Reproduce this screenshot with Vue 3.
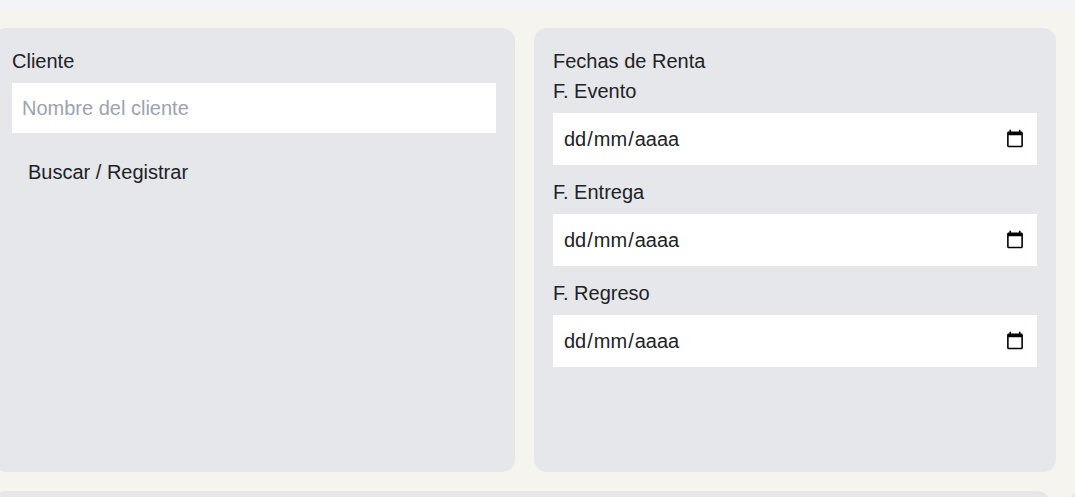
<script setup>
import { ref, reactive } from "vue";

const cliente = ref("");
const fechas = reactive([
  { id: "evento", label: "F. Evento", value: "" },
  { id: "entrega", label: "F. Entrega", value: "" },
  { id: "regreso", label: "F. Regreso", value: "" }
]);

function buscarCliente() {
  cliente.value = cliente.value.trim();
}
</script>

<template>
  <div class="page">
    <header class="topbar"></header>

    <main class="content">
      <div class="row">
        <form class="card" @submit.prevent="buscarCliente">
          <label class="text" for="cliente">Cliente</label>
          <input id="cliente" v-model="cliente" class="field" type="text" placeholder="Nombre del cliente" />
          <button class="btn" type="submit">Buscar / Registrar</button>
        </form>

        <section class="card">
          <div class="text">Fechas de Renta</div>
          <div v-for="f in fechas" :key="f.id" class="group">
            <label class="text" :for="f.id">{{ f.label }}</label>
            <div class="date">
              <input :id="f.id" v-model="f.value" class="field date-field" :class="{ empty: !f.value }" type="date" />
              <!-- date hint, shown until a day is picked -->
              <div v-if="!f.value" class="hint" aria-hidden="true">
                <span class="part">dd</span><span class="slash">/</span><span class="part">mm</span><span class="slash">/</span><span class="part">aaaa</span>
              </div>
            </div>
          </div>
        </section>
      </div>

      <div class="row bottom">
        <section class="card"></section>
        <section class="card"></section>
      </div>
    </main>
  </div>
</template>

<style>
body { margin: 0; }
</style>

<style scoped>
* { box-sizing: border-box; }
.page {
  height: 100vh;
  overflow: hidden;
  display: flex;
  flex-direction: column;
  background: #f5f4ee;
  color: #212225;
  font-family: "Liberation Sans", Arial, sans-serif;
  font-size: 20px;
  line-height: 30px;
}
.topbar { flex: none; height: 9px; background: #f2f4f7; }
.content {
  display: flex;
  flex-direction: column;
  gap: 19px;
  margin-left: -7px;
  padding: 19px 19px 0 0;
}
.row { display: grid; grid-template-columns: 1fr 1fr; gap: 19px; min-height: 444px; }
.bottom { grid-template-columns: calc(100% - 6px) 100%; }
.card {
  display: flex;
  flex-direction: column;
  align-items: flex-start;
  padding: 18px 19px;
  background: #e5e7eb;
  border-radius: 13px;
}
.text { display: block; }
.field {
  display: block;
  width: 100%;
  height: 50px;
  margin: 7px 0 0;
  padding: 0 10px;
  border: 0;
  border-radius: 0;
  background: #fff;
  color: inherit;
  font: inherit;
}
.field::placeholder { color: #9ca3af; opacity: 1; }
.btn {
  margin: 17px 0 0;
  padding: 7px 16px;
  border: 0;
  background: transparent;
  color: inherit;
  font: inherit;
  cursor: pointer;
}
.group { width: 100%; margin-bottom: 12px; }
.date { position: relative; margin-top: 7px; }
.date-field { height: 52px; margin: 0; }
.empty::-webkit-datetime-edit { opacity: 0; }
.hint {
  position: absolute;
  top: 0;
  bottom: 0;
  left: 10px;
  display: flex;
  align-items: center;
  pointer-events: none;
}
.part { padding: 0 1px; }
</style>
